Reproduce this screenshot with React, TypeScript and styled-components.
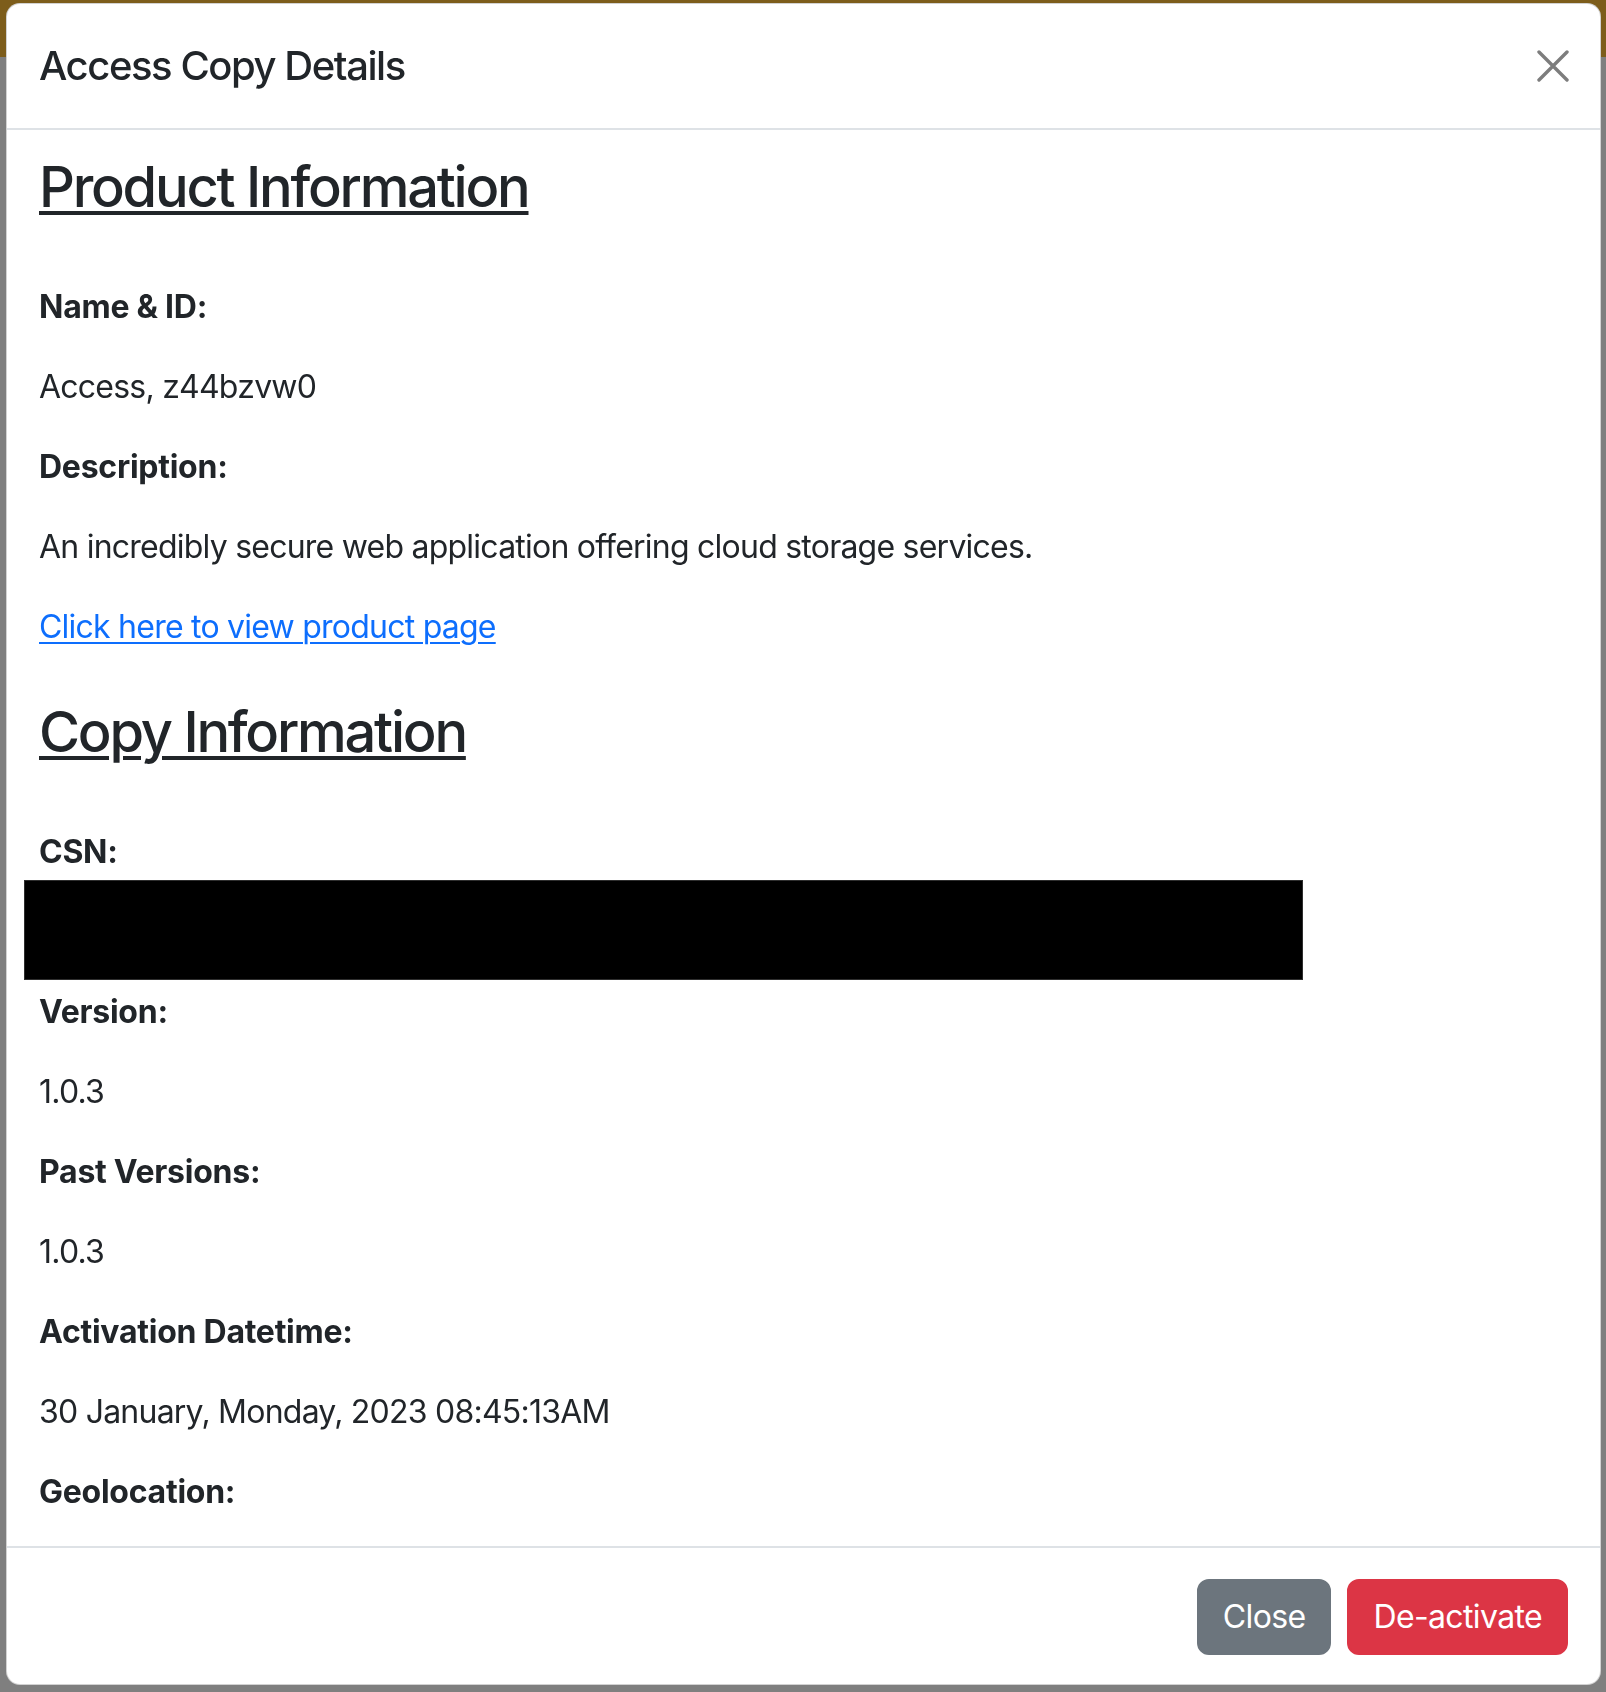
import React from "react";
import styled, { createGlobalStyle } from "styled-components";

const GlobalStyle = createGlobalStyle`
  html, body {
    margin: 0;
    padding: 0;
  }
  body {
    font-family: Inter, "Noto Sans", "Liberation Sans", sans-serif;
    color: #212529;
    overflow: hidden;
  }
  * { box-sizing: border-box; }
`;

const Page = styled.div`
  min-height: 1692px;
  background: #fff;
`;

const NavBar = styled.div`
  height: 57px;
  background: #fabb37;
`;

const Backdrop = styled.div`
  position: fixed;
  inset: 0;
  background: rgba(0, 0, 0, 0.5);
`;

const Dialog = styled.div`
  position: fixed;
  top: 3px;
  left: 6px;
  width: 1595px;
  height: 1682px;
  display: flex;
  flex-direction: column;
  background: #fff;
  border: 1px solid rgba(0, 0, 0, 0.175);
  border-radius: 14px;
  overflow: hidden;
`;

const Header = styled.div`
  display: flex;
  align-items: center;
  justify-content: space-between;
  padding: 32px;
  border-bottom: 2px solid #dee2e6;
`;

const Title = styled.h5`
  margin: 0;
  font-size: 40px;
  line-height: 60px;
  font-weight: 500;
  letter-spacing: -0.036em;
`;

const CloseX = styled.button`
  width: 40px;
  height: 40px;
  padding: 0;
  margin-right: -5px;
  border: 0;
  background: transparent;
  display: flex;
  align-items: center;
  justify-content: center;
  cursor: pointer;
`;

const Body = styled.div`
  flex: 1;
  overflow: hidden;
  padding: 24px 32px;
`;

const SectionTitle = styled.h3<{ $spaced?: boolean }>`
  margin: ${(p) => (p.$spaced ? "48px" : "0")} 0 62px;
  font-size: 56px;
  line-height: 1.2;
  font-weight: 500;
  letter-spacing: -0.04em;
  text-decoration: underline;
  text-decoration-thickness: 4px;
  text-underline-offset: 4px;
`;

const Label = styled.p`
  margin: 0 0 32px;
  font-size: 32px;
  line-height: 48px;
  font-weight: 700;
  letter-spacing: -0.008em;
`;

const Value = styled.p`
  position: relative;
  margin: 0 0 32px;
  font-size: 32px;
  line-height: 48px;
  font-weight: 400;
  letter-spacing: -0.024em;
`;

const Link = styled.a`
  color: #0d6efd;
  text-decoration: underline;
  text-decoration-thickness: 2px;
  text-underline-offset: 4px;
`;

const Redaction = styled.span`
  position: absolute;
  top: -28px;
  left: -15px;
  width: 1279px;
  height: 100px;
  background: #000;
  border: 1px solid #2e2e2e;
`;

const Footer = styled.div`
  display: flex;
  justify-content: flex-end;
  align-items: center;
  padding: 23px 24px 21px;
  border-top: 2px solid #dee2e6;
`;

const Button = styled.button<{ $variant: "secondary" | "danger" }>`
  margin: 8px;
  padding: 12px 24px;
  font-family: inherit;
  font-size: 32px;
  line-height: 48px;
  font-weight: 400;
  letter-spacing: -0.02em;
  color: #fff;
  border: 2px solid ${(p) => (p.$variant === "danger" ? "#dc3545" : "#6c757d")};
  background: ${(p) => (p.$variant === "danger" ? "#dc3545" : "#6c757d")};
  border-radius: 12px;
  cursor: pointer;
`;

const rows: { label: string; value?: string }[] = [
  { label: "Version:", value: "1.0.3" },
  { label: "Past Versions:", value: "1.0.3" },
  { label: "Activation Datetime:", value: "30 January, Monday, 2023 08:45:13AM" },
  { label: "Geolocation:" },
];

export default function App() {
  return (
    <>
      <GlobalStyle />
      <Page>
        <NavBar />
      </Page>
      <Backdrop />
      <Dialog role="dialog">
        <Header>
          <Title>Access Copy Details</Title>
          <CloseX aria-label="Close">
            <svg width="32" height="32" viewBox="0 0 32 32">
              <path
                d="M2 2 L30 30 M30 2 L2 30"
                stroke="#7d7d7d"
                strokeWidth="3.4"
                strokeLinecap="round"
              />
            </svg>
          </CloseX>
        </Header>
        <Body>
          <SectionTitle>Product Information</SectionTitle>
          <Label>Name &amp; ID:</Label>
          <Value>Access, z44bzvw0</Value>
          <Label>Description:</Label>
          <Value>An incredibly secure web application offering cloud storage services.</Value>
          <Value>
            <Link href="#">Click here to view product page</Link>
          </Value>

          <SectionTitle $spaced>Copy Information</SectionTitle>
          <Label>CSN:</Label>
          <Value>
            <Redaction />
            &nbsp;
          </Value>
          {rows.map((r) => (
            <React.Fragment key={r.label}>
              <Label>{r.label}</Label>
              {r.value && <Value>{r.value}</Value>}
            </React.Fragment>
          ))}
        </Body>
        <Footer>
          <Button $variant="secondary">Close</Button>
          <Button $variant="danger">De-activate</Button>
        </Footer>
      </Dialog>
    </>
  );
}
